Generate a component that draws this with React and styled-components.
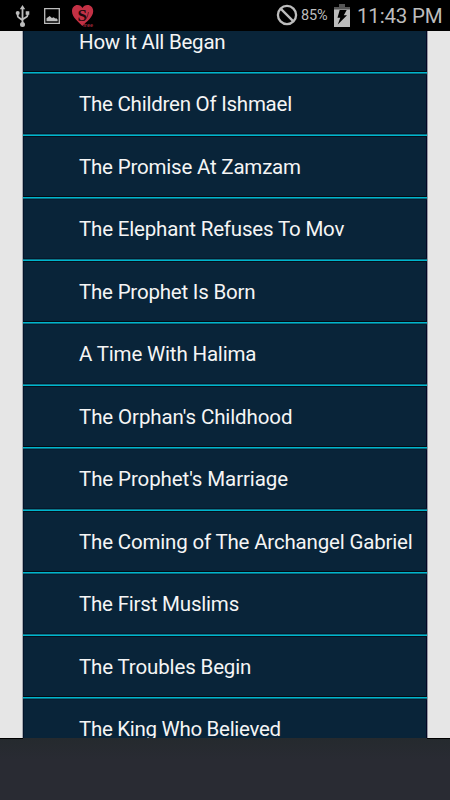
import React from 'react';
import styled, { createGlobalStyle } from 'styled-components';

const GlobalStyle = createGlobalStyle`
  html,
  body {
    margin: 0;
    background: #000;
  }
`;

const Screen = styled.div`
  display: flex;
  flex-direction: column;
  width: 450px;
  height: 800px;
  overflow: hidden;
  background: #e6e6e6;
  font-family: Roboto, 'Liberation Sans', sans-serif;
`;

const StatusBar = styled.header`
  display: flex;
  flex: none;
  justify-content: space-between;
  box-sizing: border-box;
  height: 31px;
  padding: 0 9px 0 15px;
  background: #000;
  color: #bdbdbd;
`;

const StatusGroup = styled.div`
  display: flex;
  align-items: flex-start;
  padding-top: 4px;

  svg {
    display: block;
    flex: none;
  }
`;

const Notifications = styled(StatusGroup)`
  svg + svg {
    margin-left: 14px;
  }

  svg:last-child {
    margin-left: 11px;
  }
`;

const BatteryLevel = styled.span`
  width: 28px;
  margin: 2px 5px 0 3px;
  font-size: 14.5px;
  line-height: 20px;
  letter-spacing: -0.1px;
  white-space: nowrap;
`;

const Clock = styled.span`
  width: 84px;
  margin: -3px 0 0 7px;
  font-size: 20.5px;
  line-height: 30px;
  letter-spacing: -0.2px;
  white-space: nowrap;
`;

const Content = styled.main`
  flex: none;
  box-sizing: border-box;
  height: 707px;
  padding: 0 23px;
  overflow: hidden;
  background: #e6e6e6;
`;

const ChapterList = styled.ul`
  margin: -23px 0 0;
  padding: 0;
  list-style: none;
  background: #092439;
  box-shadow: -1px 0 #a5a9b0, 1px 0 #9698a3;
`;

// Rows are 62.5px apart, so the divider lands on alternating half pixels
const Chapter = styled.li`
  box-sizing: border-box;
  height: ${(props) => (props.$odd ? 63 : 62)}px;
  padding: ${(props) => (props.$odd ? 22 : 21)}px 0 0 56px;
  background:
    ${(props) =>
      props.$odd
        ? 'linear-gradient(#06182b 1px, #087589 1px 2px, #00b4cc 2px 3px, #02101c 3px 4px, transparent 4px)'
        : 'linear-gradient(#020b14 1px, #00b4cc 1px 2px, #087083 2px 3px, #071c31 3px 4px, transparent 4px)'},
    linear-gradient(#04142a, #04142a) left / 1px 100% no-repeat,
    linear-gradient(#030624, #030624) right / 1px 100% no-repeat;
  color: #f5f5f5;
  font-size: 20.5px;
  line-height: 24px;
  letter-spacing: ${(props) => props.$spacing}px;
  white-space: nowrap;
`;

const BottomBar = styled.footer`
  flex: 1;
  background:
    linear-gradient(#000, #000) left top / 23px 1px no-repeat,
    linear-gradient(#000, #000) right top / 23px 1px no-repeat,
    linear-gradient(#252a2e, #292b33 35%, #292b33);
`;

const chapters = [
  { title: 'How It All Began', spacing: -0.24 },
  { title: 'The Children Of Ishmael', spacing: -0.24 },
  { title: 'The Promise At Zamzam', spacing: -0.2 },
  { title: 'The Elephant Refuses To Mov', spacing: -0.18 },
  { title: 'The Prophet Is Born', spacing: -0.21 },
  { title: 'A Time With Halima', spacing: -0.17 },
  { title: "The Orphan's Childhood", spacing: -0.1 },
  { title: "The Prophet's Marriage", spacing: -0.1 },
  { title: 'The Coming of The Archangel Gabriel', spacing: -0.18 },
  { title: 'The First Muslims', spacing: -0.2 },
  { title: 'The Troubles Begin', spacing: -0.14 },
  { title: 'The King Who Believed', spacing: -0.3 },
];

function UsbIcon() {
  return (
    <svg width="15" height="23" viewBox="0 0 15 23" fill="none" stroke="#bdbdbd" strokeWidth="1.8">
      <path d="M7.5 4v16M2.7 9v2.7q0 1.2 1.1 1.9l3.7 2.7M12.5 9v2.2q0 1.2-1.1 1.9l-3.9 2.5" />
      <path d="M7.5 1 4.8 5.2h5.4zM10.7 7.2h3.6v3.6h-3.6z" fill="#bdbdbd" stroke="none" />
      <circle cx="2.7" cy="9" r="2" fill="#bdbdbd" stroke="none" />
      <circle cx="7.5" cy="20.4" r="2.5" fill="#bdbdbd" stroke="none" />
    </svg>
  );
}

function PictureIcon() {
  return (
    <svg width="16" height="21" viewBox="0 -4 16 21">
      <path d="M.7.7h14.6v14.6H.7z" fill="none" stroke="#bdbdbd" strokeWidth="1.3" />
      <path d="M2.5 13.300V10.200L5.700 8l2.200 2 1.800-.8 1.500 1.300 1.100-.3 1.300 1.300v1.800z" fill="#bdbdbd" />
    </svg>
  );
}

function HeartIcon() {
  return (
    <svg width="24" height="24" viewBox="0 0 24 24">
      <path
        d="M11.3 22C8 18.2 1 13.5 1 7.2 1 3.3 3.5 1 6.5 1c2.3 0 4 1.2 4.9 3.1C12.5 2.2 14.2 1 16.5 1c3.2 0 5.7 2.4 5.7 6.2C22.2 13.500 15 17.700 11.300 22z"
        fill="#c33145"
      />
      <text x="6.5" y="17" fill="#1c080c" fontFamily="Liberation Serif, serif" fontSize="17" fontWeight="bold">
        S
      </text>
      <path d="M17.5 8q0 5-4.5 9" fill="none" stroke="#4b1520" strokeWidth=".8" />
      <text x="12" y="23" fill="#a32738" fontFamily="Liberation Sans, sans-serif" fontSize="5.5" fontWeight="bold">
        free
      </text>
    </svg>
  );
}

function BlockedIcon() {
  return (
    <svg width="22" height="22" viewBox="0 0 22 22" fill="none" stroke="#bdbdbd" strokeWidth="2.3">
      <circle cx="11" cy="11" r="9.1" />
      <path d="m4.6 4.6 12.8 12.8" />
    </svg>
  );
}

function BatteryIcon() {
  return (
    <svg width="16" height="23" viewBox="0 0 16 23">
      <path d="M5 0h6v3H5zM0 3h16v3H0z" fill="#555" />
      <path d="M0 5.5h16V23H0z" fill="#bdbdbd" />
      <path d="M5.7 6h7L9.8 11.2h3.2L3.8 20.5l2.5-6.8H3.5z" fill="#000" />
    </svg>
  );
}

export default function App() {
  return (
    <>
      <GlobalStyle />
      <Screen>
        <StatusBar>
          <Notifications>
            <UsbIcon />
            <PictureIcon />
            <HeartIcon />
          </Notifications>
          <StatusGroup>
            <BlockedIcon />
            <BatteryLevel>85%</BatteryLevel>
            <BatteryIcon />
            <Clock>11:43 PM</Clock>
          </StatusGroup>
        </StatusBar>
        <Content>
          <ChapterList>
            {chapters.map((chapter, index) => (
              <Chapter key={chapter.title} $odd={index % 2 === 0} $spacing={chapter.spacing}>
                {chapter.title}
              </Chapter>
            ))}
          </ChapterList>
        </Content>
        <BottomBar />
      </Screen>
    </>
  );
}
